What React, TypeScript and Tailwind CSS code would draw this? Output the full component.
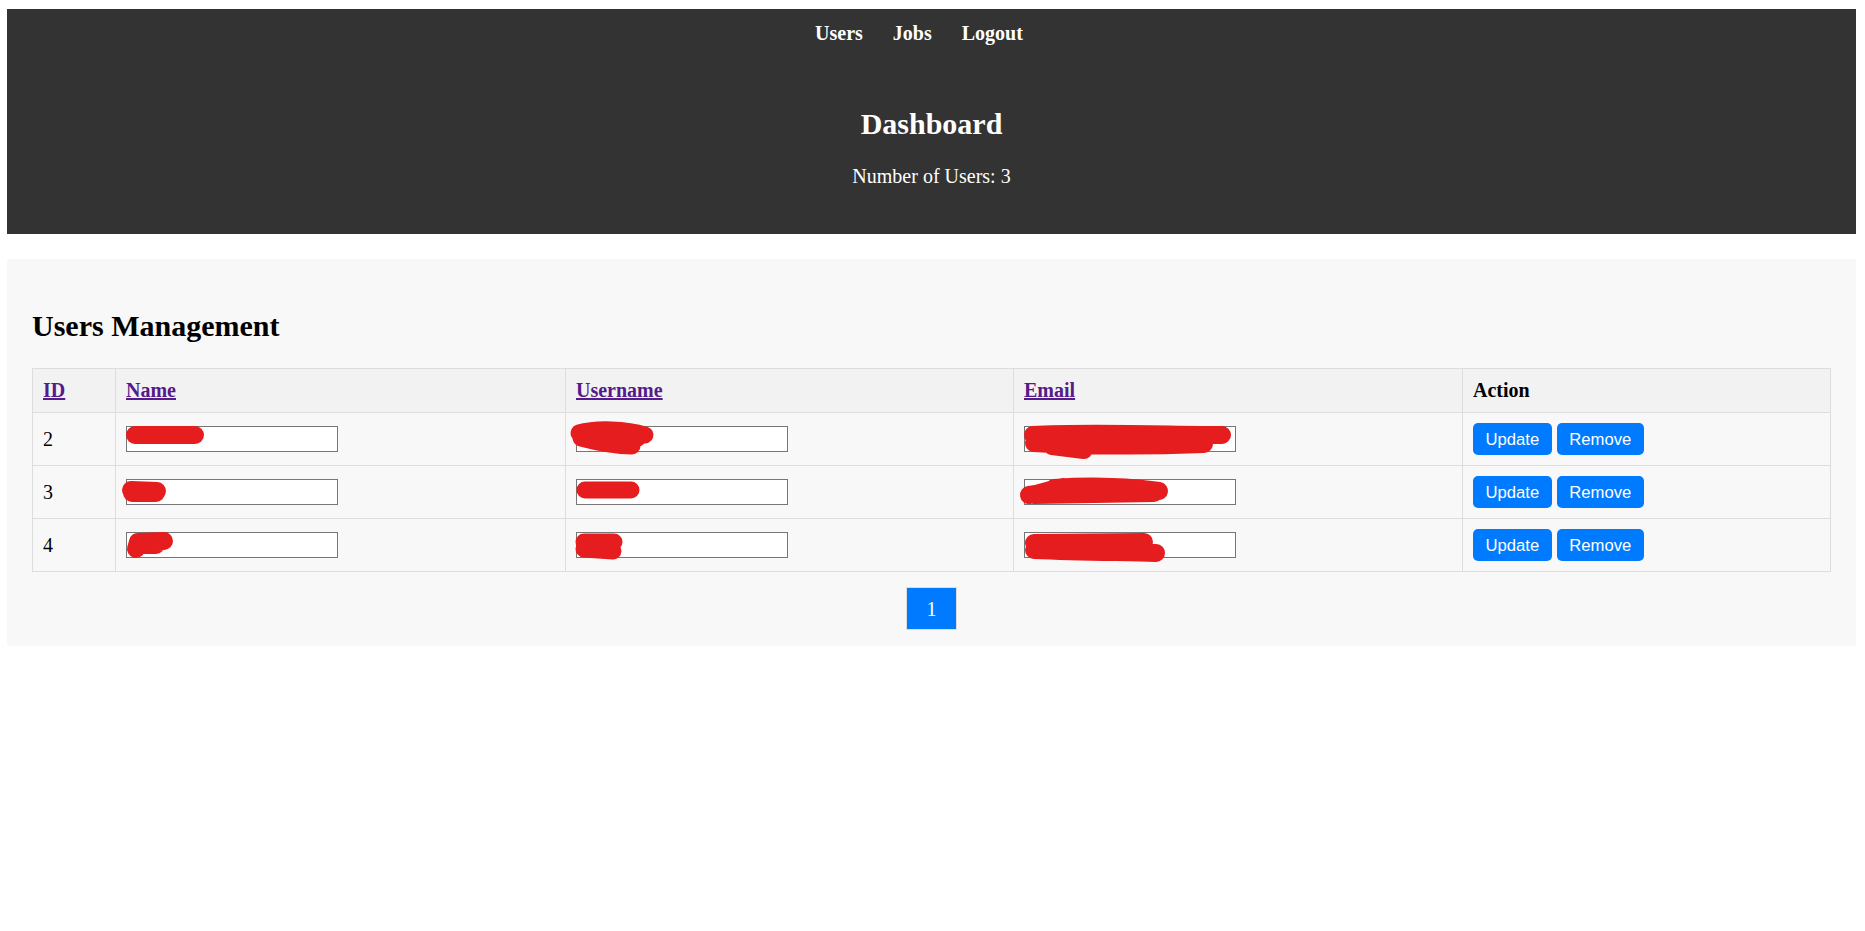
import React from "react";

interface UserRow {
  id: number;
  marks: [string, string, string];
}

// red redaction strokes, coords relative to the input's top-left corner
const users: UserRow[] = [
  {
    id: 2,
    marks: [
      "M9 9 L69 9",
      "M3 7 C20 2 50 3 69 9 M5 12 C20 16 40 20 56 20 M30 14 L62 12",
      "M9 9 C60 6 150 9 198 9 M10 17 C60 20 130 20 180 18 M28 20 L60 24",
    ],
  },
  {
    id: 3,
    marks: [
      "M5 11 L31 12 M6 14 L30 14",
      "M9 11 L55 11",
      "M5 16 C20 14 25 10 40 8 M30 9 C70 6 110 8 135 12 M10 16 L130 14",
    ],
  },
  {
    id: 4,
    marks: [
      "M10 17 L12 10 L38 9 M12 13 L30 13",
      "M8 10 L38 10 M8 17 L37 19",
      "M10 11 L120 10 M10 18 C60 20 100 20 132 21",
    ],
  },
];

const Redacted = ({ d, width }: { d: string; width: number }) => (
  <svg
    className="absolute left-[-10px] top-[-6px] overflow-visible pointer-events-none"
    width={232}
    height={40}
    viewBox="-10 -6 232 40"
  >
    <path
      d={d}
      fill="none"
      stroke="#e51d1f"
      strokeWidth={width}
      strokeLinecap="round"
      strokeLinejoin="round"
    />
  </svg>
);

const Field = ({ mark, width }: { mark: string; width: number }) => (
  <div className="relative w-[212px] h-[26px]">
    <input
      type="text"
      readOnly
      className="block w-[212px] h-[26px] bg-white border border-[#767676] outline-none"
    />
    <Redacted d={mark} width={width} />
  </div>
);

const ActionButton = ({ label }: { label: string }) => (
  <button className="h-[32px] px-[12.5px] rounded-[5px] bg-[#007bff] text-white text-[16.67px] leading-[19px] font-['Liberation_Sans',Arial,sans-serif]">
    {label}
  </button>
);

export default function App() {
  return (
    <div className="min-h-screen bg-white pl-[7px] pr-[9px] pt-[9px] font-['Liberation_Serif','Times_New_Roman',serif] text-[20px] text-black">
      <header className="bg-[#333333] text-white pt-[13px] pb-[47px]">
        <nav className="flex justify-center gap-[5px] h-[22px] leading-[22px] font-bold">
          <a href="#" className="mr-[25px]">Users</a>
          <a href="#" className="mr-[25px]">Jobs</a>
          <a href="#" className="mr-[25px]">Logout</a>
        </nav>
        <div className="mt-[63px] text-center">
          <h2 className="text-[30px] leading-[33px] font-bold">Dashboard</h2>
          <p className="mt-[25px] leading-[22px]">Number of Users: 3</p>
        </div>
      </header>

      <section className="mt-[25px] bg-[#f8f8f8] px-[25px] pt-[25px] pb-[16px]">
        <h2 className="mt-[25px] mb-[26px] text-[30px] leading-[33px] font-bold">
          Users Management
        </h2>

        <table className="w-full table-fixed border-collapse text-left">
          <colgroup>
            <col className="w-[83px]" />
            <col className="w-[450px]" />
            <col className="w-[448px]" />
            <col className="w-[449px]" />
            <col />
          </colgroup>
          <thead>
            <tr className="bg-[#f2f2f2]">
              {["ID", "Name", "Username", "Email"].map((h) => (
                <th key={h} className="border border-[#dddddd] p-[10px] leading-[23px] font-bold">
                  <a href="#" className="text-[#551a8b] underline">
                    {h}
                  </a>
                </th>
              ))}
              <th className="border border-[#dddddd] p-[10px] leading-[23px] font-bold">Action</th>
            </tr>
          </thead>
          <tbody>
            {users.map((u) => (
              <tr key={u.id}>
                <td className="border border-[#dddddd] p-[10px] leading-[22px] align-middle">{u.id}</td>
                <td className="border border-[#dddddd] p-[10px] align-middle">
                  <Field mark={u.marks[0]} width={18} />
                </td>
                <td className="border border-[#dddddd] p-[10px] align-middle">
                  <Field mark={u.marks[1]} width={17} />
                </td>
                <td className="border border-[#dddddd] p-[10px] align-middle">
                  <Field mark={u.marks[2]} width={18} />
                </td>
                <td className="border border-[#dddddd] p-[10px] align-middle">
                  <div className="flex gap-[5px]">
                    <ActionButton label="Update" />
                    <ActionButton label="Remove" />
                  </div>
                </td>
              </tr>
            ))}
          </tbody>
        </table>

        <div className="mt-[15px] flex justify-center">
          <button className="w-[51px] h-[43px] bg-[#007bff] border border-[#dddddd] text-white leading-[22px]">
            1
          </button>
        </div>
      </section>
    </div>
  );
}
